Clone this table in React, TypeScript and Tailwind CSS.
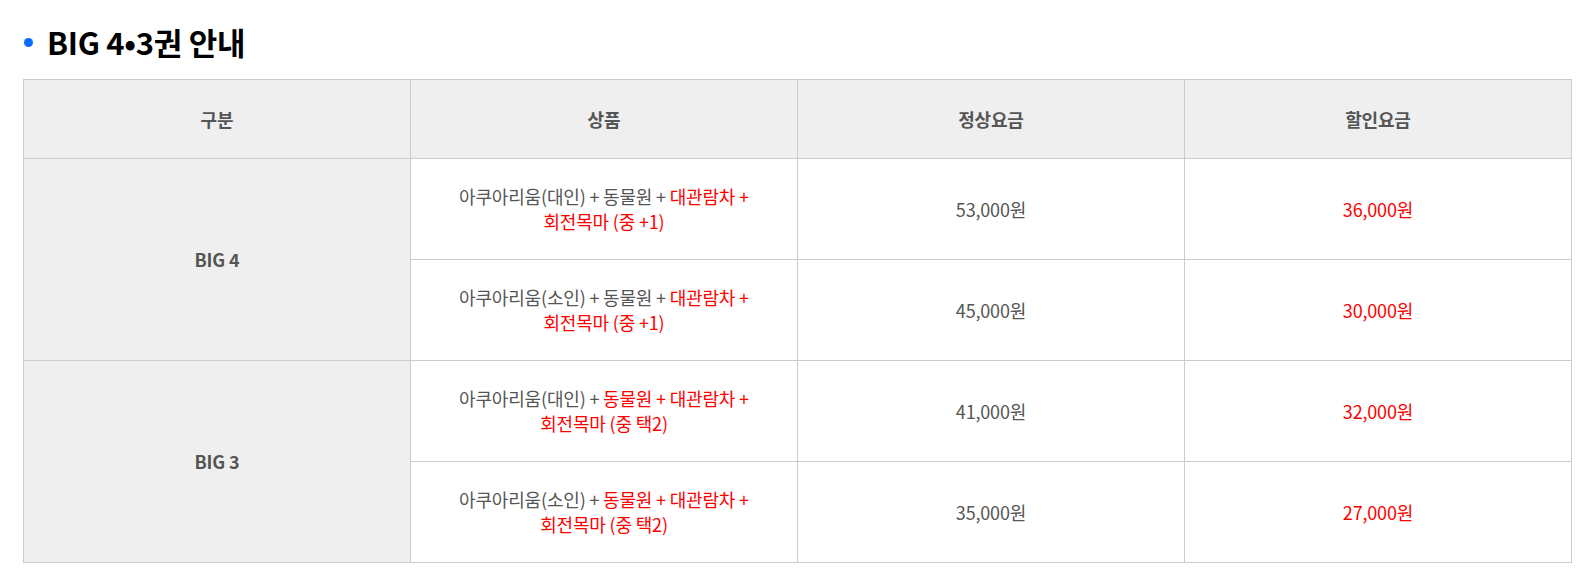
import React from 'react'

const font = { fontFamily: '"Noto Sans CJK KR", "Noto Sans", sans-serif' }

type Row = {
  product: React.ReactNode
  normal: string
  sale: string
}

const big4: Row[] = [
  {
    product: (
      <>
        아쿠아리움(대인) + 동물원 + <span className="text-[#ff0000]">대관람차 +</span>
        <br />
        <span className="text-[#ff0000]">회전목마 (중 +1)</span>
      </>
    ),
    normal: '53,000원',
    sale: '36,000원',
  },
  {
    product: (
      <>
        아쿠아리움(소인) + 동물원 + <span className="text-[#ff0000]">대관람차 +</span>
        <br />
        <span className="text-[#ff0000]">회전목마 (중 +1)</span>
      </>
    ),
    normal: '45,000원',
    sale: '30,000원',
  },
]

const big3: Row[] = [
  {
    product: (
      <>
        아쿠아리움(대인) + <span className="text-[#ff0000]">동물원 + 대관람차 +</span>
        <br />
        <span className="text-[#ff0000]">회전목마 (중 택2)</span>
      </>
    ),
    normal: '41,000원',
    sale: '32,000원',
  },
  {
    product: (
      <>
        아쿠아리움(소인) + <span className="text-[#ff0000]">동물원 + 대관람차 +</span>
        <br />
        <span className="text-[#ff0000]">회전목마 (중 택2)</span>
      </>
    ),
    normal: '35,000원',
    sale: '27,000원',
  },
]

const groups = [
  { name: 'BIG 4', rows: big4 },
  { name: 'BIG 3', rows: big3 },
]

export default function App() {
  return (
    <div className="bg-white w-[1585px] h-[576px] pt-[22px] pl-[23px]" style={font}>
      {/* Title */}
      <h2 className="flex items-center h-[40px] text-[31px] font-bold text-black tracking-[-0.01em]">
        <span className="w-[9px] h-[9px] rounded-full bg-[#0a6cff] ml-[1px] mr-[14px]" />
        BIG 4•3권 안내
      </h2>

      {/* Table */}
      <table className="mt-[17px] w-[1549px] table-fixed border-collapse border border-[#cccccc] text-[18px] text-[#555555] tracking-[-0.01em]">
        <thead>
          <tr className="h-[79px] bg-[#efefef]">
            <th className="border border-[#cccccc] font-bold">구분</th>
            <th className="border border-[#cccccc] font-bold">상품</th>
            <th className="border border-[#cccccc] font-bold">정상요금</th>
            <th className="border border-[#cccccc] font-bold">할인요금</th>
          </tr>
        </thead>
        <tbody>
          {groups.map((g) =>
            g.rows.map((r, i) => (
              <tr key={g.name + i} className="h-[101px]">
                {i === 0 && (
                  <td rowSpan={2} className="border border-[#cccccc] bg-[#efefef] text-center font-bold">
                    {g.name}
                  </td>
                )}
                <td className="border border-[#cccccc] text-center leading-[25px]">{r.product}</td>
                <td className="border border-[#cccccc] text-center">{r.normal}</td>
                <td className="border border-[#cccccc] text-center text-[#ff0000]">{r.sale}</td>
              </tr>
            ))
          )}
        </tbody>
      </table>
    </div>
  )
}
